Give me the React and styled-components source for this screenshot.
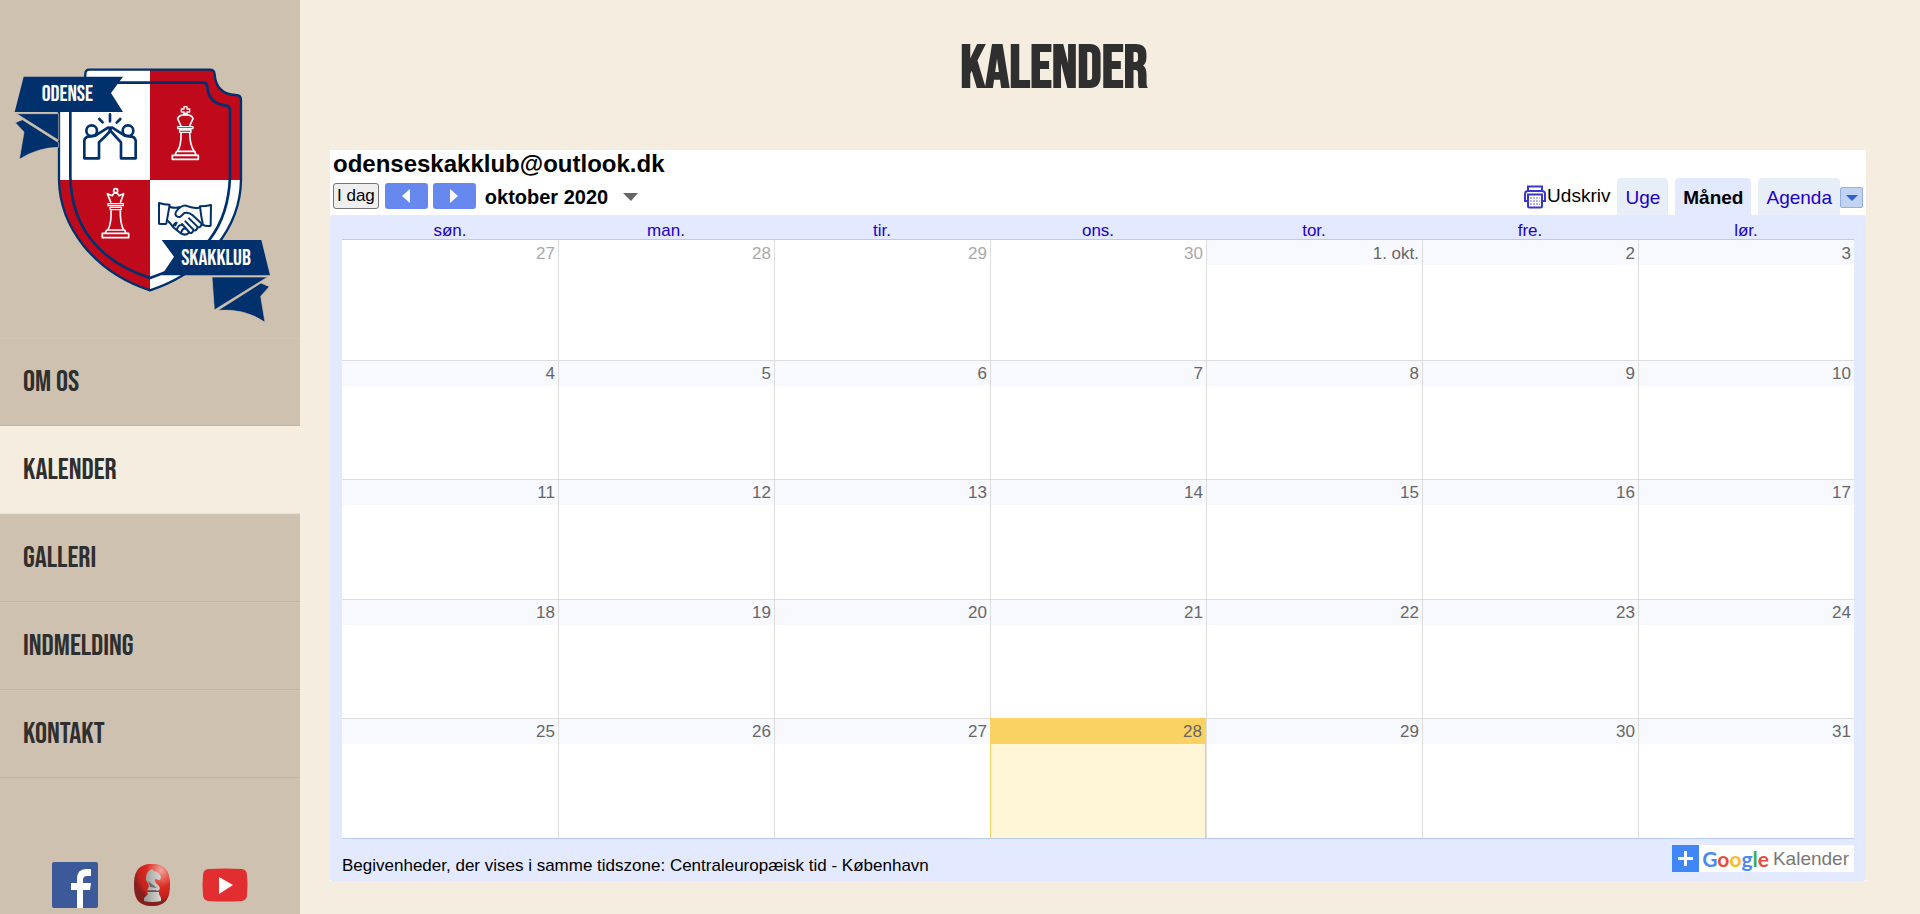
import React from "react";
import styled, { createGlobalStyle, css } from "styled-components";

const display = `"Bebas Neue", "Roboto Condensed", "Liberation Sans Narrow", "Liberation Sans", sans-serif`;
const sans = `"Liberation Sans", Arial, sans-serif`;

const GlobalStyle = createGlobalStyle`
  *, *::before, *::after { box-sizing: border-box; }
  body { margin: 0; background: #f5ede0; color: #000; font-family: ${sans}; }
`;

const Page = styled.div`
  display: flex;
  min-height: 100vh;
`;

const Sidebar = styled.aside`
  display: flex;
  flex-direction: column;
  flex: 0 0 300px;
  background: #cec1b0;
`;

const Brand = styled.a`
  display: block;
  padding-top: 50px;
  svg { display: block; width: 100%; }
`;

const Nav = styled.nav`
  display: flex;
  flex-direction: column;
`;

const NavLink = styled.a`
  display: flex;
  align-items: center;
  height: 88px;
  padding: 0 23px;
  border-top: 1px solid ${(p) => (p.$active ? "#f5ede0" : "#d1c5b5")};
  border-bottom: 1px solid ${(p) => (p.$active ? "#e9dfd0" : "#c3b5a4")};
  background: ${(p) => (p.$active ? "#f5ede0" : "transparent")};
  color: #2f2f2f;
  font: 30px/36px ${display};
  text-decoration: none;
  text-transform: uppercase;
`;

const Social = styled.div`
  display: flex;
  align-items: center;
  justify-content: space-between;
  margin-top: auto;
  padding: 0 52px 6px;
  a, svg { display: block; }
`;

const Main = styled.main`
  flex: 1;
  min-width: 0;
  padding: 34px 54px 32px 30px;
`;

const PageTitle = styled.h1`
  margin: 0 88px 46px 0;
  color: #2f2f2f;
  font: bold 60px/70px ${display};
  text-align: center;
  text-transform: uppercase;
`;

const Calendar = styled.section`
  background: #fff;
`;

const CalendarName = styled.h2`
  margin: 0;
  padding: 0 3px;
  font: bold 24px/28px ${sans};
`;

const Toolbar = styled.div`
  display: flex;
  align-items: flex-end;
  justify-content: space-between;
  height: 37px;
  padding: 0 3px;
`;

const DateControls = styled.div`
  display: flex;
  align-items: center;
  gap: 5px;
  height: 37px;
  padding-bottom: 1px;
`;

const TodayButton = styled.button`
  height: 26px;
  margin-right: 1px;
  padding: 0 3px;
  border: 1px solid #767676;
  border-radius: 3px;
  background: #efefef;
  color: #000;
  font: 17px/20px ${sans};
`;

const ArrowButton = styled.button`
  display: flex;
  align-items: center;
  justify-content: center;
  width: 43px;
  height: 26px;
  padding: 0;
  border: 0;
  border-radius: 3px;
  background: #6788ee;
`;

const MonthButton = styled.button`
  display: flex;
  align-items: center;
  gap: 15px;
  padding: 2px 4px 0;
  border: 0;
  background: none;
  color: #000;
  font: bold 20px/24px ${sans};
`;

const Views = styled.div`
  display: flex;
  align-items: flex-end;
  gap: 7px;
`;

const PrintLink = styled.a`
  display: flex;
  align-items: center;
  gap: 1px;
  height: 37px;
  color: #000;
  font: 19px/24px ${sans};
  text-decoration: none;
`;

const PrintLabel = styled.span`
  padding-bottom: 2px;
`;

const Tab = styled.button`
  height: 37px;
  padding: 3px 8px 0;
  border: 0;
  border-radius: 4px 4px 0 0;
  background: ${(p) => (p.$active ? "#e3e9ff" : "#e8eef7")};
  color: ${(p) => (p.$active ? "#000" : "#2200cc")};
  font: ${(p) => (p.$active ? "bold" : "normal")} 19px/24px ${sans};
`;

const AgendaGroup = styled.div`
  display: flex;
  align-items: flex-end;
`;

const OptionsButton = styled.button`
  display: flex;
  align-items: center;
  justify-content: center;
  width: 23px;
  height: 21px;
  margin-bottom: 7px;
  padding: 0;
  border: 1px solid #93aee8;
  border-radius: 2px;
  background: #c3d1f3;
`;

const CalendarBody = styled.div`
  padding: 0 12px 9px;
  border-radius: 3px;
  background: #e3e9ff;
`;

const MonthTable = styled.table`
  width: 100%;
  table-layout: fixed;
  border-collapse: separate;
  border-spacing: 0;
  border-bottom: 1px solid #b6cbf8;
`;

const Weekday = styled.th`
  height: 25px;
  padding: 8px 0 0;
  border-bottom: 1px solid #b6cbf8;
  color: #2200cc;
  font: 17px/16px ${sans};
  text-align: center;
`;

const today = css`
  border-color: #fad163;
  border-right: 1px solid #fad163;
  background: #fff6d8;
`;

const DayCell = styled.td`
  height: ${(p) => p.$height}px;
  padding: 0;
  border-top: ${(p) => (p.$firstRow ? "0" : "1px solid #ddd")};
  border-left: ${(p) => (p.$firstCol ? "0" : "1px solid #ddd")};
  background: #fff;
  vertical-align: top;
  ${(p) => p.$today && today}
`;

const DayNumber = styled.div`
  height: 25px;
  padding: ${(p) => (p.$firstRow ? "3px" : "2px")} 3px 0;
  background: ${(p) => (p.$today ? "#fad163" : p.$outside ? "#fff" : "#f8f9ff")};
  color: ${(p) => (p.$outside ? "#aaa" : "#666")};
  font: 17px/21px ${sans};
  text-align: right;
`;

const CalendarFooter = styled.footer`
  display: flex;
  align-items: flex-end;
  justify-content: space-between;
  padding-top: 6px;
  font: 17px/19px ${sans};
`;

const Timezone = styled.span`
  height: 16px;
`;

const GoogleButton = styled.a`
  display: flex;
  align-items: center;
  height: 27px;
  padding-right: 5px;
  background: #fff;
  color: #777;
  font: 19px/26px ${sans};
  text-decoration: none;
`;

const PlusBox = styled.span`
  display: flex;
  align-items: center;
  justify-content: center;
  width: 27px;
  height: 27px;
  margin-right: 3px;
  background: #4086f7;
`;

const GoogleWord = styled.span`
  margin-right: 4px;
  font: bold 21px/27px Lato, ${sans};
`;

const Letter = styled.span`
  color: ${(p) => p.$color};
`;

function King() {
  return (
    <g fill="none" stroke="#fff" strokeWidth="5" strokeLinejoin="round">
      <path d="M552 170h9v7h8v9h-8v8h-9v-8h-8v-9h8z" strokeWidth="4" />
      <path d="M543 228L533 206Q536 195 556 194Q577 195 579 206L569 228M548 196L556 190L564 196" />
      <path d="M533 230h46v6h-46zM539 240h34v7h-34z" strokeWidth="4" />
      <path d="M543 249Q544 286 533 303M569 249Q570 286 582 303" />
      <path d="M530 304h54l4 11h-63zM517 316h78v12h-78z" />
    </g>
  );
}

function Queen() {
  return (
    <g fill="none" stroke="#fff" strokeWidth="5" strokeLinejoin="round">
      <circle cx="347" cy="422" r="6" />
      <path d="M333 458L322 431L337 437Q340 429 347 429Q354 429 357 437L371 431L361 458" />
      <path d="M324 461h46v6h-46zM330 472h34v7h-34z" strokeWidth="4" />
      <path d="M333 481Q335 518 324 539M361 481Q360 518 370 539" />
      <path d="M320 540h54l4 10h-63zM307 550h79v13h-79z" />
    </g>
  );
}

function Crest() {
  const outer =
    "M268 59H630Q643 59 644 73Q648 132 707 135Q723 135 723 150V390C721 530 620 665 450 721C280 665 180 530 177 390V150Q177 135 200 132Q256 125 256 72Q256 59 268 59Z";
  return (
    <svg viewBox="0 0 900 864" role="img" aria-label="Odense Skakklub">
      <defs>
        <clipPath id="shield"><path d={outer} /></clipPath>
      </defs>
      <g clipPath="url(#shield)">
        <path d="M170 50H450V390H170zM450 390H730V730H450z" fill="#fff" />
        <path d="M450 50H730V390H450zM170 390H450V730H170z" fill="#c00a1b" />
      </g>
      <g fill="none" stroke="#00316c">
        <path d={outer} strokeWidth="7" />
        <path d="M330 98H610Q621 98 622 110Q625 160 675 166Q690 167 690 180V380C685 530 612 631 450 684C287 631 214 520 211 380V180" strokeWidth="8" />
        <g strokeWidth="8" strokeLinejoin="round" strokeLinecap="round">
          <circle cx="275" cy="242" r="16" />
          <circle cx="384" cy="242" r="16" />
          <path d="M253 325V272Q254 259 272 259L286 257L324 233Q333 232 332 240Q330 246 297 277V325z" />
          <path d="M407 325V272Q405 259 388 259L374 257L337 233Q329 232 329 240L363 277V325z" />
          <path d="M330 193V214M298 207L308 217M361 207L350 218" />
        </g>
        <g strokeWidth="6" strokeLinejoin="round" strokeLinecap="round">
          <path d="M477 459Q492 464 509 464Q504 494 499 521Q490 523 477 521zM633 465Q617 469 600 469Q603 500 609 525Q620 530 632 527z" />
          <path d="M510 471Q526 476 541 471M597 473Q577 476 558 467Q550 466 542 471Q526 483 526 493Q529 503 541 500L553 489Q567 486 578 496L606 522" />
          <path d="M504 513Q513 522 519 531L544 551Q556 558 567 548Q577 552 580 541Q592 543 592 532Q602 534 604 524M519 531Q523 518 530 518L526 526M530 541Q535 524 543 526M543 549Q548 533 556 536M556 514L580 539M567 505L592 530M546 522L567 546" />
        </g>
      </g>
      <King />
      <Queen />
      <g fill="#00316c" stroke="#cec1b0" strokeWidth="2">
        <path d="M50 191H176V271z" />
        <path d="M46 218L67 209L176 278V292Q112 293 58 328L72 246z" />
        <path d="M636 681H803L643 780z" />
        <path d="M783 699L808 710L782 739L795 817Q735 775 654 781z" />
      </g>
      <path d="M71 80H369L333 129L369 186H44zM485 570H784L810 676H485L522 620z" fill="#00316c" />
      <g fill="#fff" fontFamily={display} fontSize="66" textAnchor="middle">
        <text x="202" y="154">ODENSE</text>
        <text x="648" y="644">SKAKKLUB</text>
      </g>
    </svg>
  );
}

function FacebookIcon() {
  return (
    <svg width="46" height="46" viewBox="0 0 46 46">
      <rect width="46" height="46" rx="2" fill="#3c5a99" />
      <path d="M25 46V28H19V21H25V17Q25 7 34 7H39V14H35Q31 14 31 18V21H39L38 28H31V46z" fill="#fff" />
    </svg>
  );
}

function ChessIcon() {
  return (
    <svg width="42" height="44" viewBox="-4 0 42 44">
      <defs>
        <radialGradient id="ball" cx="0.75" cy="0.15" r="0.9">
          <stop offset="0" stopColor="#f0a59b" />
          <stop offset="0.45" stopColor="#dc2a20" />
          <stop offset="0.7" stopColor="#c2231d" />
          <stop offset="0.85" stopColor="#85201d" />
        </radialGradient>
        <linearGradient id="knight">
          <stop offset="0" stopColor="#9a9a98" />
          <stop offset="1" stopColor="#d8d6d2" />
        </linearGradient>
      </defs>
      <path d="M19 1C33 1 37 9 37 22S33 43 19 43S1 35 1 22S5 1 19 1z" fill="url(#ball)" />
      <path d="M19 6L21 8Q26 9 28 14L27 17L22 16Q21 19 26 23Q28 26 25 28L14 27Q18 23 13 17Q12 9 19 6zM14 29H26V31L28 35V38Q19 40 11 38V35L15 31z" fill="url(#knight)" />
      <path d="M13 27Q19 29 26 27M15 18L24 25L17 24z" fill="#6d6c6a" />
    </svg>
  );
}

function YoutubeIcon() {
  return (
    <svg width="46" height="34" viewBox="0 0 46 34">
      <path d="M6 1Q23 0 40 1Q45 2 45 7Q46 17 45 27Q45 32 40 33Q23 34 6 33Q1 32 1 27Q0 17 1 7Q1 2 6 1z" fill="#e22e30" />
      <path d="M17 9L31 17L17 26z" fill="#fff" />
    </svg>
  );
}

function PrintIcon() {
  return (
    <svg width="22" height="24" viewBox="0 0 22 24" fill="none" stroke="#3a35cc" strokeWidth="2">
      <path d="M4 6V1.5H18V6M4 16H1V9Q1 6 4 6H18Q21 6 21 9V16H18M4 9.5H18V21Q18 22.5 16.5 22.5H5.5Q4 22.5 4 21z" />
      <path d="M6 13H16M6 16H16M6 19H16" strokeWidth="1.4" strokeDasharray="2 1" opacity="0.5" />
    </svg>
  );
}

const Triangle = ({ d, width, height, color }) => (
  <svg width={width} height={height} viewBox={`0 0 ${width} ${height}`}>
    <path d={d} fill={color} />
  </svg>
);

const navItems = ["Om os", "Kalender", "Galleri", "Indmelding", "Kontakt"];
const weekdays = ["søn.", "man.", "tir.", "ons.", "tor.", "fre.", "lør."];
const rowHeights = [120, 119, 120, 119, 120];
const weeks = rowHeights.map((_, w) =>
  weekdays.map((_, d) => {
    const n = w * 7 + d - 3;
    return {
      label: n < 1 ? String(n + 30) : n === 1 ? "1. okt." : String(n),
      outside: n < 1,
      today: n === 28,
    };
  })
);
const googleLetters = [
  ["G", "#4a89f4"],
  ["o", "#e94c3d"],
  ["o", "#fbbc1b"],
  ["g", "#4a89f4"],
  ["l", "#3cab58"],
  ["e", "#e94c3d"],
];

export default function App() {
  return (
    <Page>
      <GlobalStyle />
      <Sidebar>
        <Brand href="#"><Crest /></Brand>
        <Nav>
          {navItems.map((item) => (
            <NavLink key={item} href="#" $active={item === "Kalender"}>{item}</NavLink>
          ))}
        </Nav>
        <Social>
          <a href="#" aria-label="Facebook"><FacebookIcon /></a>
          <a href="#" aria-label="Dansk Skak Union"><ChessIcon /></a>
          <a href="#" aria-label="YouTube"><YoutubeIcon /></a>
        </Social>
      </Sidebar>
      <Main>
        <PageTitle>Kalender</PageTitle>
        <Calendar>
          <CalendarName>odenseskakklub@outlook.dk</CalendarName>
          <Toolbar>
            <DateControls>
              <TodayButton>I dag</TodayButton>
              <ArrowButton aria-label="Forrige">
                <Triangle width={8} height={14} d="M8 0V14L0 7z" color="#fff" />
              </ArrowButton>
              <ArrowButton aria-label="Næste">
                <Triangle width={8} height={14} d="M0 0V14L8 7z" color="#fff" />
              </ArrowButton>
              <MonthButton>
                oktober 2020
                <Triangle width={15} height={8} d="M0 0H15L8 8z" color="#666" />
              </MonthButton>
            </DateControls>
            <Views>
              <PrintLink href="#"><PrintIcon /><PrintLabel>Udskriv</PrintLabel></PrintLink>
              <Tab>Uge</Tab>
              <Tab $active>Måned</Tab>
              <AgendaGroup>
                <Tab>Agenda</Tab>
                <OptionsButton aria-label="Indstillinger">
                  <Triangle width={12} height={6} d="M0 0H12L6 6z" color="#2a62cf" />
                </OptionsButton>
              </AgendaGroup>
            </Views>
          </Toolbar>
          <CalendarBody>
            <MonthTable>
              <thead>
                <tr>{weekdays.map((d) => <Weekday key={d} scope="col">{d}</Weekday>)}</tr>
              </thead>
              <tbody>
                {weeks.map((week, w) => (
                  <tr key={w}>
                    {week.map((day, d) => (
                      <DayCell key={d} $height={rowHeights[w]} $firstRow={w === 0} $firstCol={d === 0} $today={day.today}>
                        <DayNumber $firstRow={w === 0} $outside={day.outside} $today={day.today}>
                          {day.label}
                        </DayNumber>
                      </DayCell>
                    ))}
                  </tr>
                ))}
              </tbody>
            </MonthTable>
            <CalendarFooter>
              <Timezone>
                Begivenheder, der vises i samme tidszone: Centraleuropæisk tid - København
              </Timezone>
              <GoogleButton href="#">
                <PlusBox>
                  <svg width="15" height="15" viewBox="0 0 15 15">
                    <path d="M6 0H9V6H15V9H9V15H6V9H0V6H6z" fill="#fff" />
                  </svg>
                </PlusBox>
                <GoogleWord>
                  {googleLetters.map(([ch, color], i) => (
                    <Letter key={i} $color={color}>{ch}</Letter>
                  ))}
                </GoogleWord>
                Kalender
              </GoogleButton>
            </CalendarFooter>
          </CalendarBody>
        </Calendar>
      </Main>
    </Page>
  );
}
